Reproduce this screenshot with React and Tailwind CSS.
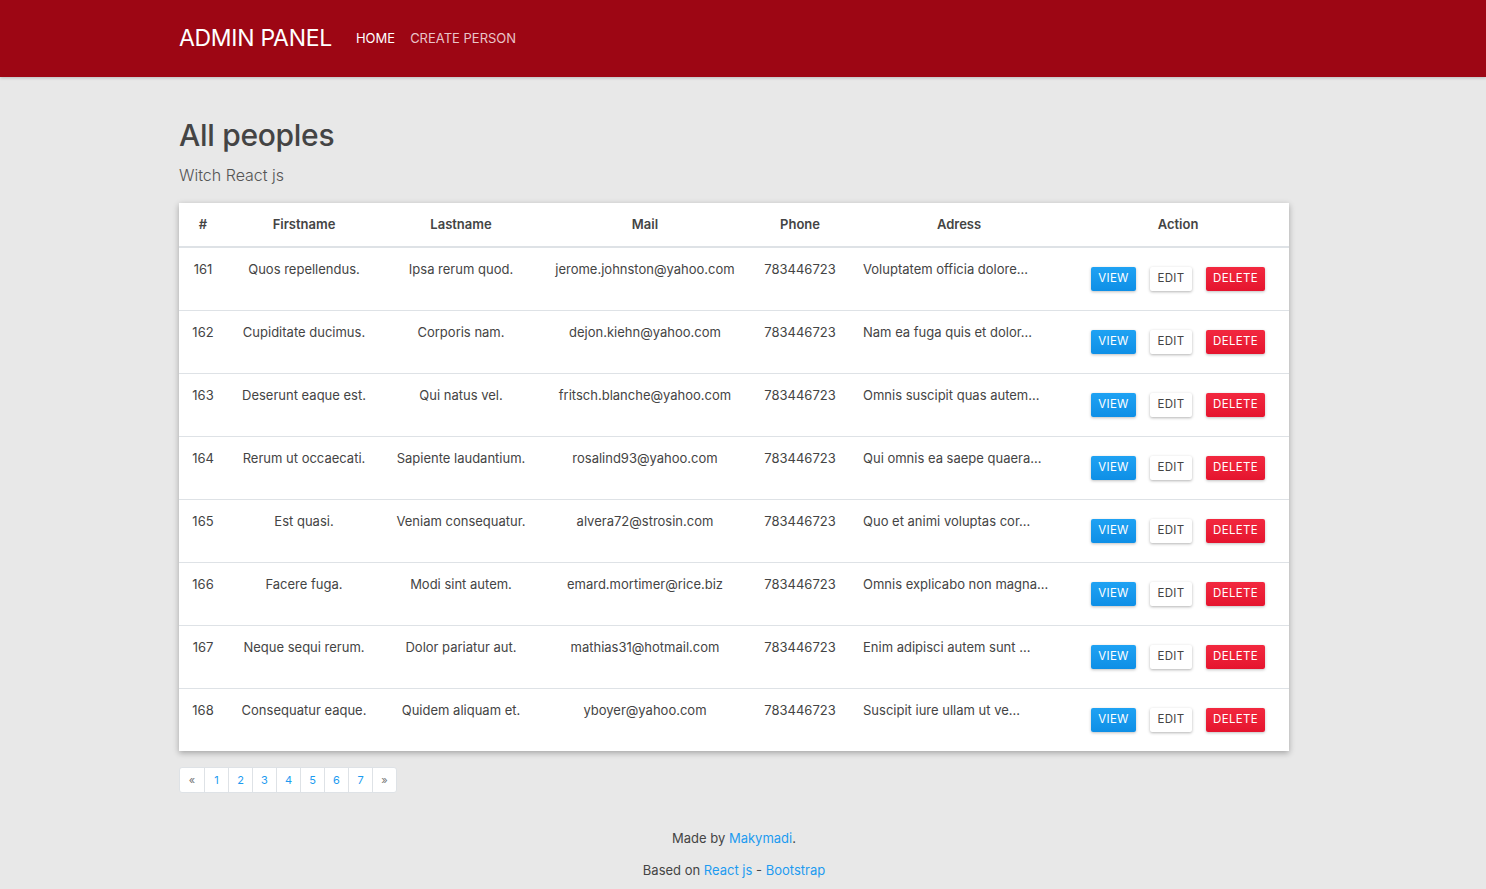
import React from "react";

const people = [
  { id: 161, first: "Quos repellendus.", last: "Ipsa rerum quod.", mail: "jerome.johnston@yahoo.com", address: "Voluptatem officia dolore..." },
  { id: 162, first: "Cupiditate ducimus.", last: "Corporis nam.", mail: "dejon.kiehn@yahoo.com", address: "Nam ea fuga quis et dolor..." },
  { id: 163, first: "Deserunt eaque est.", last: "Qui natus vel.", mail: "fritsch.blanche@yahoo.com", address: "Omnis suscipit quas autem..." },
  { id: 164, first: "Rerum ut occaecati.", last: "Sapiente laudantium.", mail: "rosalind93@yahoo.com", address: "Qui omnis ea saepe quaera..." },
  { id: 165, first: "Est quasi.", last: "Veniam consequatur.", mail: "alvera72@strosin.com", address: "Quo et animi voluptas cor..." },
  { id: 166, first: "Facere fuga.", last: "Modi sint autem.", mail: "emard.mortimer@rice.biz", address: "Omnis explicabo non magna..." },
  { id: 167, first: "Neque sequi rerum.", last: "Dolor pariatur aut.", mail: "mathias31@hotmail.com", address: "Enim adipisci autem sunt ..." },
  { id: 168, first: "Consequatur eaque.", last: "Quidem aliquam et.", mail: "yboyer@yahoo.com", address: "Suscipit iure ullam ut ve..." },
];

const pages = ["«", "1", "2", "3", "4", "5", "6", "7", "»"];

export default function App() {
  return (
    <div className="min-h-[889px] bg-[#e8e8e8] font-['Inter','Noto_Sans',sans-serif] text-[#444]">
      <header className="h-[77px] bg-[#9d0614] shadow-[0_1px_3px_rgba(0,0,0,0.2)]">
        <div className="ml-[179px] flex h-full items-center">
          <span className="text-[23px] font-normal tracking-[-0.3px] text-white">ADMIN PANEL</span>
          <nav className="ml-[24px] flex gap-[15px] text-[13px]">
            <span className="text-white">HOME</span>
            <span className="text-[#e9c4c8]">CREATE PERSON</span>
          </nav>
        </div>
      </header>

      <main className="ml-[179px] w-[1110px]">
        <h1 className="mt-[39px] text-[30px] font-medium leading-[38px] tracking-[-0.3px] text-[#444]">All peoples</h1>
        <p className="mt-[9px] text-[16px] font-light text-[#555]">Witch React js</p>

        <div className="mt-[16px] bg-white shadow-[0_2px_6px_rgba(0,0,0,0.3)]">
          <div className="grid h-[45px] grid-cols-[48px_154px_160px_208px_102px_216px_222px] items-center border-b-2 border-[#dee2e6] text-[13px] font-semibold text-[#444]">
            <span className="pt-[1px] text-center">#</span>
            <span className="pt-[1px] text-center">Firstname</span>
            <span className="pt-[1px] text-center">Lastname</span>
            <span className="pt-[1px] text-center">Mail</span>
            <span className="pt-[1px] text-center">Phone</span>
            <span className="pt-[1px] text-center">Adress</span>
            <span className="pt-[1px] text-center">Action</span>
          </div>
          {people.map((p, i) => (
            <div
              key={p.id}
              className={`grid grid-cols-[48px_154px_160px_208px_102px_216px_222px] text-[13px] text-[#444] ${i < people.length - 1 ? "h-[63px] border-b border-[#dee2e6]" : "h-[62px]"}`}
            >
              <span className="pt-[12px] text-center">{p.id}</span>
              <span className="pt-[12px] text-center">{p.first}</span>
              <span className="pt-[12px] text-center">{p.last}</span>
              <span className="pt-[12px] text-center">{p.mail}</span>
              <span className="pt-[12px] text-center">783446723</span>
              <span className="pl-[12px] pt-[12px]">{p.address}</span>
              <div className="flex items-start justify-center gap-[14px] pt-[19px]">
                <button className="h-[24px] w-[45px] rounded-[2px] bg-gradient-to-b from-[#1fa2f3] to-[#0e8fe6] text-[11.5px] tracking-[0.3px] text-white shadow-[0_1px_3px_rgba(0,0,0,0.25)]">VIEW</button>
                <button className="h-[24px] w-[42px] rounded-[2px] bg-white text-[11.5px] tracking-[0.3px] text-[#444] shadow-[0_1px_3px_rgba(0,0,0,0.3)]">EDIT</button>
                <button className="h-[24px] w-[59px] rounded-[2px] bg-gradient-to-b from-[#f2283f] to-[#e5142e] text-[11.5px] tracking-[0.3px] text-white shadow-[0_1px_3px_rgba(0,0,0,0.25)]">DELETE</button>
              </div>
            </div>
          ))}
        </div>

        <div className="mt-[16px] flex w-fit rounded-[3px] border border-[#dee2e6] bg-white">
          {pages.map((pg, i) => (
            <span
              key={i}
              className={`flex h-[24px] w-[24px] items-center justify-center text-[11px] ${i === 0 || i === pages.length - 1 ? "text-[#777]" : "text-[#1d9bf0]"} ${i > 0 ? "border-l border-[#dee2e6]" : ""}`}
            >
              {pg}
            </span>
          ))}
        </div>
      </main>

      <footer className="w-[1468px] pb-[8px] pt-[36px] text-center text-[13px] text-[#444]">
        <p>
          Made by <span className="text-[#1d9bf0]">Makymadi</span>.
        </p>
        <p className="mt-[12px]">
          Based on <span className="text-[#1d9bf0]">React js</span> - <span className="text-[#1d9bf0]">Bootstrap</span>
        </p>
      </footer>
    </div>
  );
}
